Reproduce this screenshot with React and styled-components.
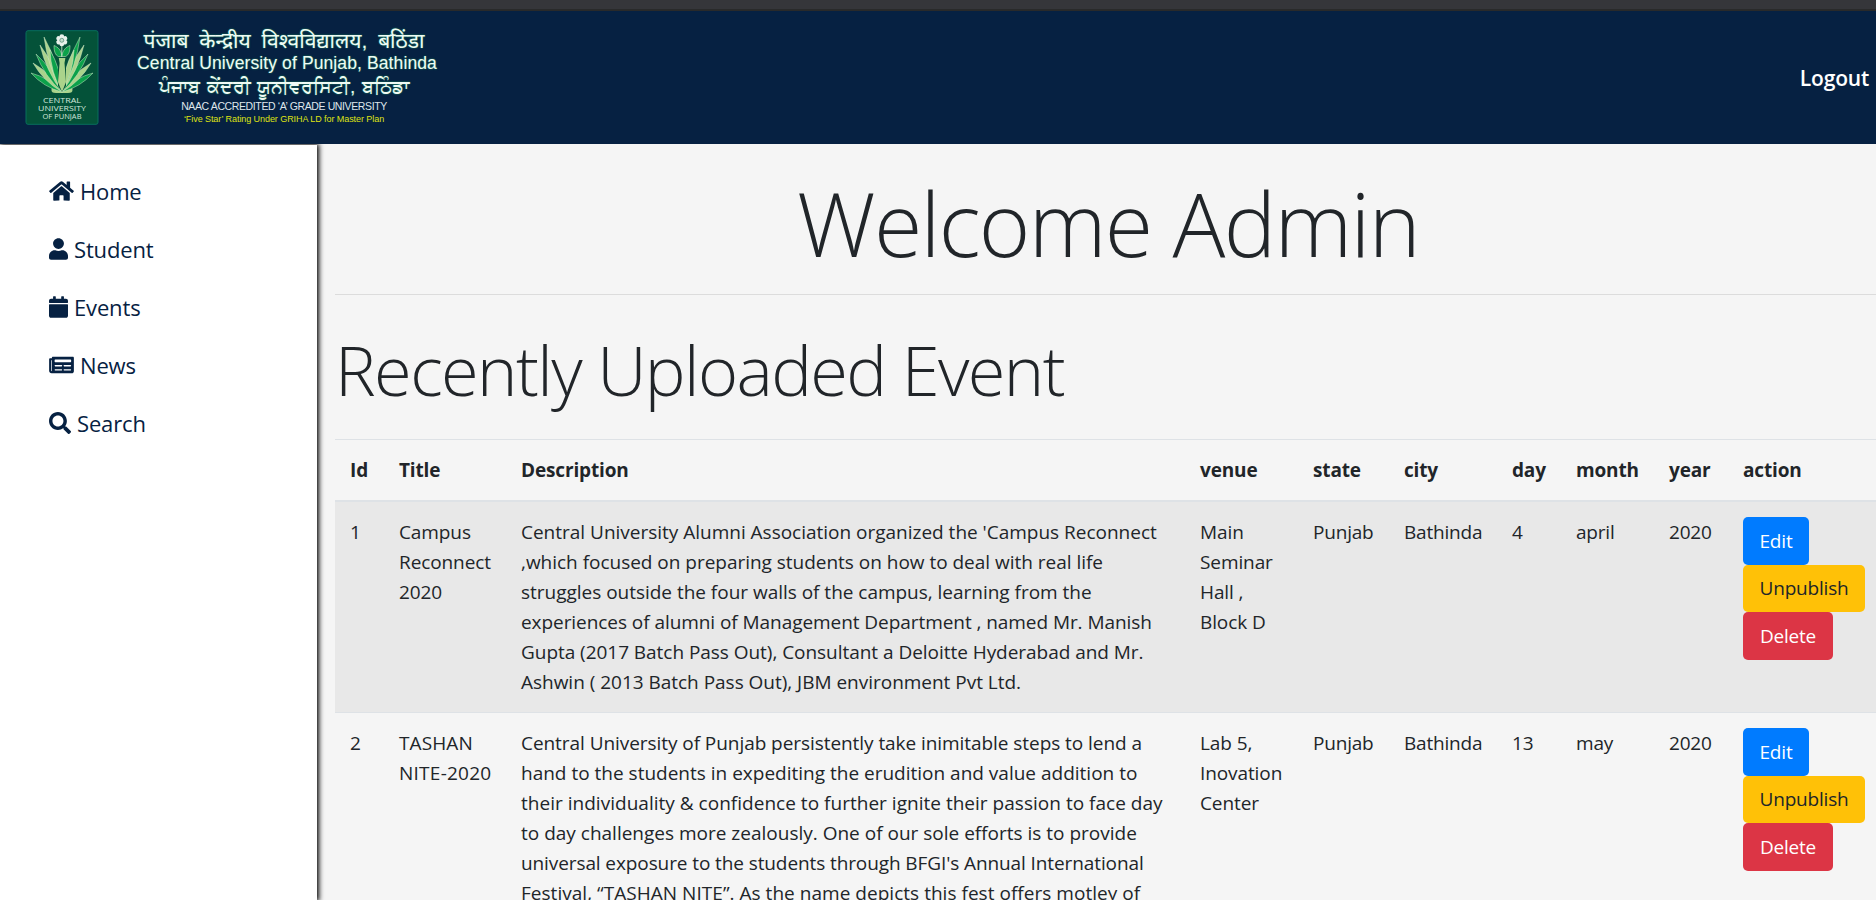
import React from "react";
import styled, { createGlobalStyle } from "styled-components";
import { FaHome, FaUser, FaCalendar, FaNewspaper, FaSearch } from "react-icons/fa";

const GlobalStyle = createGlobalStyle`
  *, *::before, *::after { box-sizing: border-box; }
  html, body { margin: 0; height: 100%; overflow: hidden; }
  body {
    background: #f5f5f5;
    color: #212529;
    font-family: "Segoe UI", "Open Sans", "Noto Sans", sans-serif;
    font-size: 19px;
    line-height: 30px;
  }
`;

const Page = styled.div`
  display: flex;
  flex-direction: column;
  height: 900px;
  overflow: hidden;
`;

const BrowserEdge = styled.div`
  flex: none;
  height: 11px;
  background: #35363a;
  border-bottom: 2px solid #292a2a;
`;

const Header = styled.header`
  position: relative;
  z-index: 1;
  flex: none;
  display: flex;
  align-items: center;
  justify-content: space-between;
  height: 133px;
  padding: 0 7px 0 25px;
  background: #062142;
`;

const Brand = styled.div`
  display: flex;
  align-items: center;
  height: 95px;
`;

const BrandText = styled.div`
  display: flex;
  flex-direction: column;
  align-items: center;
  width: 302px;
  margin-left: 34px;
  white-space: nowrap;
  font-family: "Liberation Sans", "Noto Sans", sans-serif;
`;

const BrandLine = styled.div`
  height: ${(p) => p.$height}px;
  padding-left: ${(p) => p.$indent || 0}px;
  line-height: ${(p) => p.$height}px;
  font-size: ${(p) => p.$size}px;
  letter-spacing: ${(p) => p.$track || 0}px;
  word-spacing: ${(p) => p.$gap || 0}px;
  color: ${(p) => p.$color || "#effaf5"};
  text-shadow: ${(p) => (p.$glow ? "0 0 2px #1c7a5c, 0 0 1px #1c7a5c" : "none")};
`;

const Logout = styled.a`
  font-size: 21px;
  font-weight: 600;
  letter-spacing: -0.2px;
  color: #fff;
`;

const Body = styled.div`
  flex: 1;
  display: flex;
  min-height: 0;
`;

const Sidebar = styled.nav`
  flex: none;
  width: 317px;
  margin-top: 1px;
  padding: 17px 0 0 49px;
  background: #fff;
  box-shadow: 1px 0 5px 1px #000;
`;

const NavItem = styled.a`
  display: flex;
  align-items: center;
  gap: 6px;
  height: 58px;
  font-size: 22px;
  font-weight: 500;
  letter-spacing: -0.15px;
  color: #062142;

  svg { flex: none; height: 22px; width: ${(p) => p.$icon}px; }
`;

const Main = styled.main`
  flex: none;
  width: 1564px;
  padding-left: 18px;
`;

const Title = styled.h1`
  margin: 0;
  height: 151px;
  padding-top: 25px;
  border-bottom: 1px solid #dcdcdc;
  font-size: 88px;
  font-weight: 300;
  line-height: 108px;
  letter-spacing: -1.7px;
  text-align: center;
`;

const SectionTitle = styled.h2`
  margin: 0;
  height: 144px;
  padding-top: 33px;
  font-size: 68.5px;
  font-weight: 300;
  line-height: 84px;
  letter-spacing: -1.6px;
  white-space: nowrap;
`;

const Table = styled.table`
  width: 1546px;
  table-layout: fixed;
  border-collapse: separate;
  border-spacing: 0;
`;

const HeadCell = styled.th`
  height: 63px;
  padding: 0 0 0 15px;
  border-top: 1px solid #dee2e6;
  border-bottom: 2px solid #dee2e6;
  font-weight: 700;
  text-align: left;
  letter-spacing: -0.15px;
`;

const Row = styled.tr`
  background: ${(p) => (p.$shaded ? "#e8e8e8" : "transparent")};
`;

const Cell = styled.td`
  padding: 15px 0 15px 15px;
  border-top: ${(p) => (p.$first ? "0" : "1px solid #dee2e6")};
  vertical-align: top;
  white-space: nowrap;
  letter-spacing: -0.2px;
`;

const Line = styled.div`
  letter-spacing: ${(p) => p.$track ?? -0.1}px;
`;

const Actions = styled.div`
  display: flex;
  flex-direction: column;
  align-items: flex-start;
`;

const Button = styled.button`
  width: ${(p) => p.$width}px;
  height: 47.5px;
  padding: 0;
  border: 0;
  border-radius: 5px;
  background: ${(p) => p.$bg};
  color: ${(p) => p.$color || "#fff"};
  font: inherit;
  font-weight: ${(p) => p.$weight || 500};
  letter-spacing: -0.2px;
`;

const nav = [
  { label: "Home", Icon: FaHome, width: 25 },
  { label: "Student", Icon: FaUser, width: 19 },
  { label: "Events", Icon: FaCalendar, width: 19 },
  { label: "News", Icon: FaNewspaper, width: 25 },
  { label: "Search", Icon: FaSearch, width: 22 },
];

const columns = [
  ["Id", 49], ["Title", 122], ["Description", 679], ["venue", 113], ["state", 91],
  ["city", 108], ["day", 64], ["month", 93], ["year", 74], ["action", 153],
];

const events = [
  {
    id: 1,
    title: [["Campus"], ["Reconnect"], ["2020"]],
    description: [
      ["Central University Alumni Association organized the 'Campus Reconnect", -0.01],
      [",which focused on preparing students on how to deal with real life", -0.02],
      ["struggles outside the four walls of the campus, learning from the", -0.02],
      ["experiences of alumni of Management Department , named Mr. Manish", -0.06],
      ["Gupta (2017 Batch Pass Out), Consultant a Deloitte Hyderabad and Mr.", -0.04],
      ["Ashwin ( 2013 Batch Pass Out), JBM environment Pvt Ltd.", -0.02],
    ],
    venue: [["Main"], ["Seminar"], ["Hall ,"], ["Block D"]],
    day: 4,
    month: "april",
  },
  {
    id: 2,
    title: [["TASHAN", 0.1], ["NITE-2020", 0.25]],
    description: [
      ["Central University of Punjab persistently take inimitable steps to lend a", -0.06],
      ["hand to the students in expediting the erudition and value addition to", 0],
      ["their individuality & confidence to further ignite their passion to face day", 0.02],
      ["to day challenges more zealously. One of our sole efforts is to provide", 0],
      ["universal exposure to the students through BFGI's Annual International", -0.1],
      ["Festival, “TASHAN NITE”. As the name depicts this fest offers motley of", 0.03],
    ],
    venue: [["Lab 5,"], ["Inovation"], ["Center"]],
    day: 13,
    month: "may",
  },
];

const GREEN = "#0ba14a";
const LIME = "#aad38b";

const leaves = [
  [6, 43, GREEN], [68, 43, GREEN],
  [8, 33, LIME], [66, 33, LIME],
  [11, 24, GREEN], [63, 24, GREEN],
  [15, 15, LIME], [59, 15, LIME],
  [19, 7, LIME], [55, 7, GREEN],
  [25, 20, GREEN], [49, 20, LIME],
];

function leafPath(tipX, tipY) {
  const dx = tipX - 37;
  const dy = tipY - 62;
  const len = Math.hypot(dx, dy);
  const ox = (-dy / len) * 5.5;
  const oy = (dx / len) * 5.5;
  const mx = 37 + dx * 0.5;
  const my = 62 + dy * 0.5;
  return `M37 62 Q${mx + ox} ${my + oy} ${tipX} ${tipY} Q${mx - ox} ${my - oy} 37 62Z`;
}

function Crest() {
  return (
    <svg width="74" height="95" viewBox="0 0 74 95">
      <rect x="1" y="0.7" width="72" height="93.6" rx="2" fill="#045239" stroke="#08705c" />
      <path d="M28 54 H46 C47 58 50 63 43 63 H31 C24 63 27 58 28 54Z" fill={LIME} />
      {leaves.map(([x, y, fill]) => (
        <path key={`${x}-${y}`} d={leafPath(x, y)} fill={fill} stroke="#d8efcf" strokeWidth="0.45" />
      ))}
      <path d="M33 27 H41 V56 L37 62 L33 56Z" fill="#045239" />
      <path d="M33.8 28 H40.4 L39.5 33 L41 52 L37 62 L33 52 L34.6 33Z" fill={LIME} />
      <path d="M36.8 25.5 C36 20 33 17 29 15.5 C29 21 30 25 33.5 26.5 H40.5 C44 25 45 21 45 15.5 C41 17 38 20 36.8 25.5Z" fill={GREEN} stroke="#d8efcf" strokeWidth="0.5" />
      <path d="M36.8 16 V27" stroke="#d8efcf" strokeWidth="0.8" />
      {[0, 60, 120, 180, 240, 300].map((a) => (
        <circle key={a} cx="36.8" cy="6.7" r="2.4" fill="#e9f1eb" transform={`rotate(${a} 36.8 10.3)`} />
      ))}
      <circle cx="36.8" cy="10.3" r="2" fill="#c6dccf" stroke="#3b7a62" strokeWidth="0.6" />
      <g fill="#d3e7dc" fontFamily="Open Sans, sans-serif" fontSize="8" fontWeight="500" textAnchor="middle">
        <text x="37" y="72.6" textLength="38" lengthAdjust="spacingAndGlyphs">CENTRAL</text>
        <text x="37" y="81" textLength="48" lengthAdjust="spacingAndGlyphs">UNIVERSITY</text>
        <text x="37" y="89.2" textLength="39" lengthAdjust="spacingAndGlyphs">OF PUNJAB</text>
      </g>
    </svg>
  );
}

export default function App() {
  return (
    <Page>
      <GlobalStyle />
      <BrowserEdge />
      <Header>
        <Brand>
          <Crest />
          <BrandText>
            <BrandLine $size={21} $height={24} $gap={5} $glow>पंजाब केन्द्रीय विश्वविद्यालय, बठिंडा</BrandLine>
            <BrandLine $size={17.5} $height={21} $track={0.11} $indent={6} $glow>Central University of Punjab, Bathinda</BrandLine>
            <BrandLine $size={19} $height={25} $gap={1} $glow>ਪੰਜਾਬ ਕੇਂਦਰੀ ਯੂਨੀਵਰਸਿਟੀ, ਬਠਿੰਡਾ</BrandLine>
            <BrandLine $size={10.5} $height={14} $track={-0.38} $color="#dfe6ec">NAAC ACCREDITED ‘A’ GRADE UNIVERSITY</BrandLine>
            <BrandLine $size={9} $height={13} $track={-0.07} $color="#dfe312">‘Five Star’ Rating Under GRIHA LD for Master Plan</BrandLine>
          </BrandText>
        </Brand>
        <Logout>Logout</Logout>
      </Header>
      <Body>
        <Sidebar>
          {nav.map(({ label, Icon, width }) => (
            <NavItem key={label} $icon={width}>
              <Icon />
              {label}
            </NavItem>
          ))}
        </Sidebar>
        <Main>
          <Title>Welcome Admin</Title>
          <SectionTitle>Recently Uploaded Event</SectionTitle>
          <Table>
            <colgroup>
              {columns.map(([name, width]) => <col key={name} width={width} />)}
            </colgroup>
            <thead>
              <tr>{columns.map(([name]) => <HeadCell key={name}>{name}</HeadCell>)}</tr>
            </thead>
            <tbody>
              {events.map((e, i) => (
                <Row key={e.id} $shaded={i % 2 === 0}>
                  <Cell $first={!i}>{e.id}</Cell>
                  {[e.title, e.description, e.venue].map((lines, c) => (
                    <Cell key={c} $first={!i}>
                      {lines.map(([text, track]) => <Line key={text} $track={track}>{text}</Line>)}
                    </Cell>
                  ))}
                  <Cell $first={!i}>Punjab</Cell>
                  <Cell $first={!i}>Bathinda</Cell>
                  <Cell $first={!i}>{e.day}</Cell>
                  <Cell $first={!i}>{e.month}</Cell>
                  <Cell $first={!i}>2020</Cell>
                  <Cell $first={!i}>
                    <Actions>
                      <Button $width={66} $bg="#007bff">Edit</Button>
                      <Button $width={122} $bg="#ffc107" $color="#212529" $weight={400}>Unpublish</Button>
                      <Button $width={90} $bg="#dc3545">Delete</Button>
                    </Actions>
                  </Cell>
                </Row>
              ))}
            </tbody>
          </Table>
        </Main>
      </Body>
    </Page>
  );
}
